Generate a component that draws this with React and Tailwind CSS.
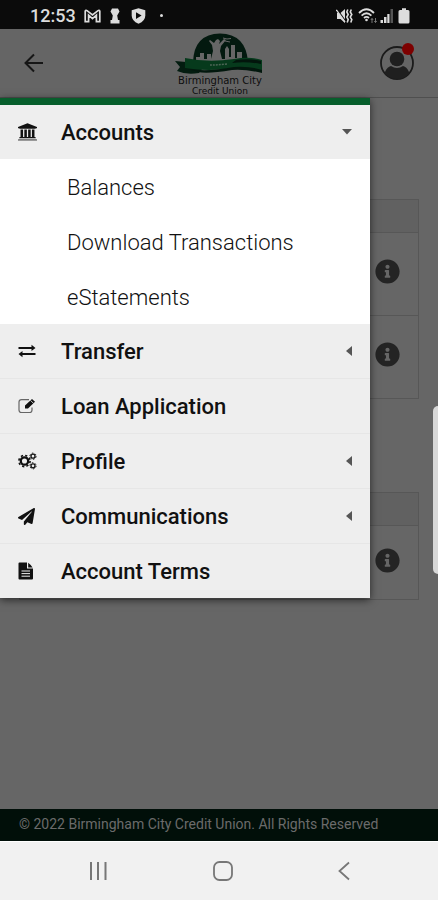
import React, { useState } from 'react';
import { FaInfoCircle, FaPaperPlane } from 'react-icons/fa';

function BankIcon() {
  return (
    <svg className="w-[19px] h-[18px]" viewBox="0 0 1920 1792" fill="currentColor">
      <path d="M960 0l960 384v128h-128q0 26-20.5 45t-48.5 19h-1526q-28 0-48.5-19t-20.5-45h-128v-128zm-704 640h256v768h128v-768h256v768h128v-768h256v768h128v-768h256v768h59q28 0 48.5 19t20.5 45v64h-1664v-64q0-26 20.5-45t48.5-19h59v-768z" />
      <path d="M1851 1600q28 0 48.500 19t20.500 45v128h-1920v-128q0-26 20.500-45t48.500-19z" opacity="0.5" />
    </svg>
  );
}

function TransferIcon() {
  return (
    <svg className="w-[18px] h-[18px]" viewBox="0 0 18 18" fill="currentColor">
      <path d="M0.5 5h13V2.8L17.500 5.900L13.500 9V7H0.5z" />
      <path d="M17.500 11H4.500V8.900L0.5 12L4.500 15.200V13H17.500z" />
    </svg>
  );
}

function EditIcon() {
  return (
    <svg className="w-[18px] h-[18px]" viewBox="0 0 18 18" fill="none">
      <path d="M11 2.6H3.5Q1 2.6 1 5v8Q1 15.500 3.500 15.500h8.200Q14 15.500 14 13v-2.400" stroke="#666" strokeWidth="1.200" />
      <path d="M7 8.500L14 2L17 4.800L10 11.500H7z" fill="currentColor" />
      <path d="M12.500 3.400L15.500 6.400" stroke="#eee" strokeWidth="0.800" />
    </svg>
  );
}

function GearsIcon() {
  return (
    <svg className="w-[19px] h-[18px]" viewBox="0 0 19 18" fill="none" stroke="currentColor">
      <circle cx="6.500" cy="9" r="3.700" strokeWidth="2.300" />
      <circle cx="6.500" cy="9" r="5.600" strokeWidth="1.600" strokeDasharray="2.200 2.200" />
      <circle cx="15" cy="4.200" r="2" strokeWidth="1.300" />
      <circle cx="15" cy="4.200" r="3.100" strokeWidth="1" strokeDasharray="1.600 1.650" />
      <circle cx="15" cy="13.800" r="2" strokeWidth="1.300" />
      <circle cx="15" cy="13.800" r="3.100" strokeWidth="1" strokeDasharray="1.600 1.650" />
    </svg>
  );
}

function FileIcon() {
  return (
    <svg className="w-[16px] h-[18px]" viewBox="0 0 16 18" fill="currentColor">
      <path d="M1.5 0.5H9V6.5H15V16.5Q15 17.5 14 17.5H1.5Q0.5 17.5 0.5 16.5V1.5Q0.5 0.5 1.5 0.5z" />
      <path d="M10.2 0.8Q12.5 2.6 14.6 5.4H10.2z" />
      <path d="M3.5 9h8.5M3.5 11.6h8.5M3.5 14.2h8.5" stroke="#eee" strokeWidth="1" />
    </svg>
  );
}

const accountLinks = ['Balances', 'Download Transactions', 'eStatements'];

const menuItems = [
  { label: 'Transfer', icon: <TransferIcon />, nested: true },
  { label: 'Loan Application', icon: <EditIcon /> },
  { label: 'Profile', icon: <GearsIcon />, nested: true },
  { label: 'Communications', icon: <FaPaperPlane size={17} />, nested: true },
  { label: 'Account Terms', icon: <FileIcon /> },
];

function StatusBar() {
  return (
    <div className="h-[29px] bg-[#0b0b0b] text-[#dcdcdc] flex items-center pl-[30px] pr-[28px]">
      <span className="text-[18px] leading-none mt-[2px] font-medium">12:53</span>
      {/* Mail */}
      <svg className="w-[17px] h-[14px] ml-[8px] mt-[2px]" viewBox="0 0 17 14" fill="none" stroke="currentColor" strokeWidth="1.7">
        <path d="M1.2 12.6V2.2Q1.8 0.8 3 1.6L8.5 6L14 1.6Q15.2 0.8 15.8 2.2V12.6H12.4V6.2L8.5 9.6L4.6 6.2V12.6z" />
      </svg>
      {/* Keyhole */}
      <svg className="w-[10px] h-[16px] ml-[9px] mt-[2px]" viewBox="0 0 10 16" fill="currentColor">
        <path d="M2 0.5H8L9.5 3.5L7.2 7.5L8 12H9.5V15.5H0.5V12H2L2.8 7.5L0.5 3.5z" />
      </svg>
      {/* Shield */}
      <svg className="w-[15px] h-[16px] ml-[11px] mt-[2px]" viewBox="0 0 15 16">
        <path d="M7.5 0.3L14.3 2.3V7.5Q14.3 13 7.5 15.8Q0.7 13 0.7 7.5V2.3z" fill="currentColor" />
        <path d="M5 4.2L10.6 7.6L5 11z" fill="#0b0b0b" />
      </svg>
      <span className="w-[3px] h-[3px] rounded-full bg-[#dcdcdc] ml-[14px] mt-[2px]" />

      <div className="ml-auto flex items-center mt-[2px]">
        {/* Muted, vibrating */}
        <svg className="w-[17px] h-[16px]" viewBox="0 0 17 16" fill="currentColor">
          <path d="M1 5H4.5L9 1V15L4.5 11H1z" />
          <path d="M0.8 1L10 13.8" stroke="#0b0b0b" strokeWidth="1.4" />
          <path d="M0.3 1.8L9 14" stroke="currentColor" strokeWidth="1.4" />
          <path d="M11.8 1.5L10.8 4L12.2 6.5L10.8 9L12.2 11.5L11.2 14.5M15.3 1.5L14.3 4L15.8 6.5L14.3 9L15.8 11.5L14.8 14.5" fill="none" stroke="currentColor" strokeWidth="1.6" />
        </svg>
        {/* Wifi */}
        <svg className="w-[20px] h-[16px] ml-[5px]" viewBox="0 0 20 16" fill="none" stroke="currentColor" strokeWidth="1.8">
          <path d="M1 5Q8.5 -2.5 16 5M3.6 7.6Q8.5 2.8 13.4 7.6M6 10Q8.5 7.8 11 10" />
          <circle cx="8.5" cy="12" r="1.3" fill="currentColor" stroke="none" />
          <path d="M14 10.5V15M12.8 12L14 10.5L15.2 12M17.5 10V14.5M16.3 13L17.5 14.5L18.7 13" stroke="#777" strokeWidth="1" />
        </svg>
        {/* Signal */}
        <svg className="w-[14px] h-[16px] ml-[2px]" viewBox="0 0 14 16" fill="currentColor">
          <path d="M0.5 12H3V15H0.5zM4 9H6.5V15H4zM7.3 6H9.5V15H7.3z" />
          <path d="M10.5 1H13V15H10.5z" fill="#555" />
        </svg>
        {/* Battery */}
        <svg className="w-[12px] h-[16px] ml-[4px]" viewBox="0 0 12 16" fill="currentColor">
          <path d="M4 0.3H8V2H10Q11.5 2 11.5 3.5V14Q11.5 15.5 10 15.5H2Q0.5 15.5 0.5 14V3.5Q0.5 2 2 2H4z" />
        </svg>
      </div>
    </div>
  );
}

function Logo() {
  return (
    <svg className="w-[90px] h-[64px]" viewBox="0 0 90 64" role="img" aria-label="Birmingham City Credit Union">
      {/* Dome */}
      <path d="M19 31Q20 3 46 2.500Q72 3 74 31z" fill="#03190f" />
      {/* Skyline */}
      <path d="M22 32V26H26V22H30V28H33V23H37V28L39 20L38 14L35 10L36 9L40 12L42 9L44 8L46 10L45 13L50 8L52 9L47 15L46 20L48 28H51V18L53 15L55 18V26H57V14H61V27H63V21H68V32z" fill="#666" />
      <path d="M49 7L53 8L57 7.500M51 10L56 11" stroke="#666" strokeWidth="1" fill="none" />
      {/* Ribbon */}
      <path d="M1 30L12 31V36L28 38L25 42Q12 44 3 40L6 36z" fill="#031c10" />
      <path d="M11 27Q34 32 60 28Q76 25 88 29V41Q74 36 60 37Q34 41 11 37z" fill="#063a1c" />
      <path d="M62 29Q76 27 87 30V33Q72 30 58 32z" fill="#02150c" />
      <path d="M14 38Q35 41 60 36Q76 35 88 39V42Q72 38 58 39Q34 43 24 41z" fill="#02170d" />
      <path d="M36 34Q44 34 53 33" stroke="#4d6656" strokeWidth="1.500" fill="none" strokeDasharray="2 1" />
      <text x="46" y="53" textAnchor="middle" fontFamily="DejaVu Sans, sans-serif" fontSize="10" fill="#0d0d0d">
        Birmingham City
      </text>
      <text x="46" y="63" textAnchor="middle" fontFamily="DejaVu Sans, sans-serif" fontSize="9" fill="#0d0d0d">
        Credit Union
      </text>
    </svg>
  );
}

function Header() {
  return (
    <header className="h-[69px] bg-[#656565] border-b border-[#4f4f4f] grid grid-cols-3 items-center pl-[23px] pr-[23px]">
      <button type="button" aria-label="Back" className="justify-self-start">
        <svg className="w-[22px] h-[20px]" viewBox="0 0 22 20" fill="none" stroke="#161616" strokeWidth="2">
          <path d="M20 10H2.500M11 1.500L2.500 10L11 18.500" />
        </svg>
      </button>
      <div className="justify-self-center">
        <Logo />
      </div>
      <button type="button" aria-label="User profile" className="justify-self-end">
        <svg className="w-[36px] h-[40px]" viewBox="0 0 36 40">
          <clipPath id="avatarClip">
            <circle cx="18" cy="20" r="16" />
          </clipPath>
          <circle cx="18" cy="20" r="16" fill="none" stroke="#1b1b1b" strokeWidth="1.800" />
          <g fill="#1f1f1f" clipPath="url(#avatarClip)">
            <circle cx="18" cy="16" r="7.300" />
            <path d="M6 38V29Q8 24 12 23Q18 27 24 23Q28 24 30 29V38z" />
          </g>
          <circle cx="29" cy="6" r="6" fill="#7d0000" />
        </svg>
      </button>
    </header>
  );
}

function AccountCard({ rows, rowClass }) {
  return (
    <section className="ml-[19px] mr-[19px] border border-[#575757]">
      <div className="h-[32px] bg-[#616161]" />
      {rows.map((name) => (
        <div key={name} className={`${rowClass} border-t border-[#575757] flex items-center justify-end pr-[18px] pb-[5px]`}>
          <button type="button" aria-label={`${name} details`} className="text-[#242424]">
            <FaInfoCircle size={25} />
          </button>
        </div>
      ))}
    </section>
  );
}

function Menu() {
  const [open, setOpen] = useState(true);

  return (
    <nav className="absolute top-0 left-0 right-[68px] z-10 bg-[#eee] border-t-[7px] border-[#075e2c] shadow-[0_2px_8px_rgba(0,0,0,0.6)] text-[#111]">
      <button
        type="button"
        aria-expanded={open}
        onClick={() => setOpen(!open)}
        className="w-full h-[54px] flex items-center pl-[18px] pr-[17px] text-left"
      >
        <span className="w-[43px]"><BankIcon /></span>
        <span className="flex-1 text-[22px] font-medium">Accounts</span>
        <svg className="w-[12px] h-[6px]" viewBox="0 0 12 6" fill="#555">
          <path d="M1 0H11L6 5.500z" />
        </svg>
      </button>
      {open && (
        <ul className="bg-white">
          {accountLinks.map((label) => (
            <li key={label}>
              <a href="#" className="h-[55px] flex items-center pl-[67px] pt-[2px] text-[22px] font-light">{label}</a>
            </li>
          ))}
        </ul>
      )}
      <ul className="divide-y divide-[#e6e6e6]">
        {menuItems.map((item) => (
          <li key={item.label}>
            <button type="button" className="w-full h-[54px] flex items-center pl-[18px] pr-[18px] text-left">
              <span className="w-[43px]">{item.icon}</span>
              <span className="flex-1 text-[22px] font-medium">{item.label}</span>
              {item.nested && (
                <svg className="w-[6px] h-[10px]" viewBox="0 0 6 10" fill="#555">
                  <path d="M6 0V10L0 5z" />
                </svg>
              )}
            </button>
          </li>
        ))}
      </ul>
    </nav>
  );
}

function NavigationBar() {
  return (
    <div className="h-[59px] bg-[#f1f1f1] border-t border-white flex items-center justify-between pl-[87px] pr-[87px] text-[#777]">
      <button type="button" aria-label="Recent apps">
        <svg className="w-[22px] h-[20px]" viewBox="0 0 22 20" stroke="currentColor" strokeWidth="2">
          <path d="M4 1V19M11 1V19M18.500 1V19" />
        </svg>
      </button>
      <button type="button" aria-label="Home">
        <svg className="w-[20px] h-[20px]" viewBox="0 0 20 20" fill="none" stroke="currentColor" strokeWidth="1.800">
          <rect x="1" y="1" width="18" height="18" rx="5.500" />
        </svg>
      </button>
      <button type="button" aria-label="Back">
        <svg className="w-[14px] h-[20px]" viewBox="0 0 14 20" fill="none" stroke="currentColor" strokeWidth="1.800">
          <path d="M12 1.500L2.500 10L12 18.500" />
        </svg>
      </button>
    </div>
  );
}

export default function App() {
  return (
    <div className="relative min-h-screen flex flex-col bg-[#666] font-[Roboto,sans-serif]">
      <StatusBar />
      <Header />
      <main className="relative flex-1 pt-[101px] pb-[100px] flex flex-col gap-[93px]">
        <Menu />
        <AccountCard rows={['Savings', 'Checking']} rowClass="h-[83px]" />
        <AccountCard rows={['Loan']} rowClass="h-[74px]" />
      </main>
      <footer className="h-[32px] bg-[#010f09] text-[#6b6b6b] text-[14px] flex items-center pl-[19px] pb-[2px]">
        © 2022 Birmingham City Credit Union. All Rights Reserved
      </footer>
      <NavigationBar />
      {/* Edge panel handle */}
      <div className="absolute right-0 top-[406px] w-[5px] h-[168px] rounded-l-[5px] bg-[#d8d8d8]" />
    </div>
  );
}
